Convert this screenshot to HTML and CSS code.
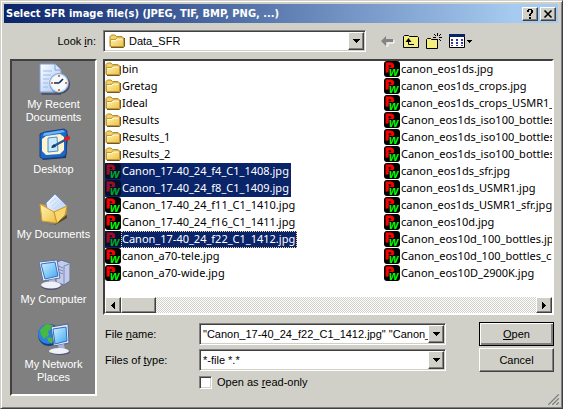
FILE: index.html
```html
<!DOCTYPE html>
<html lang="en">
<head>
<meta charset="utf-8">
<title>Select SFR image file(s)</title>
<link rel="stylesheet" href="styles.css">
</head>
<body>
<svg class="defs" aria-hidden="true">
  <defs>
    <linearGradient id="gold" x1="0" y1="0" x2="1" y2="1"><stop offset="0" stop-color="#fff6b4"/><stop offset="1" stop-color="#eebf45"/></linearGradient>
    <linearGradient id="screen" x1="0" y1="0" x2="1" y2="1"><stop offset="0" stop-color="#d4f4ff"/><stop offset="1" stop-color="#3da5f4"/></linearGradient>
    <linearGradient id="paper" x1="0" y1="0" x2="1" y2="1"><stop offset="0" stop-color="#ffffff"/><stop offset="1" stop-color="#a3c4f3"/></linearGradient>
    <symbol id="folder" viewBox="0 0 16 16">
      <path d="M2 14.500h12.500l1-1V5" fill="none" stroke="#6d5a28"/>
      <path d="M1 13V3.500L2.500 2H6l1.500 1.500H13L14.500 5v8.500H1z" fill="#f3d169" stroke="#b78c23"/>
      <path d="M1.500 13.500v-7h5l1-1.500h7v8.500z" fill="url(#gold)" stroke="#c29a34"/>
      <path d="M2.500 7.500h4.500l1-1.500h5.500" fill="none" stroke="#fffbd8"/>
    </symbol>
    <symbol id="pw" viewBox="0 0 16 16">
      <rect width="16" height="16" rx="3" fill="#000"/>
      <text x="1" y="11" class="pw-p">P</text>
      <text x="5" y="15" class="pw-w">w</text>
    </symbol>
    <symbol id="down" viewBox="0 0 7 4"><path d="M0 0h7v1H6v1H5v1H4v1H3V3H2V2H1V1H0z"/></symbol>
  </defs>
</svg>
<main class="dialog">
  <header class="titlebar">
    <h1>Select SFR image file(s) (JPEG, TIF, BMP, PNG, ...)</h1>
    <button class="raised caption" aria-label="Help"><svg width="10" height="10" viewBox="0 0 10 10"><path d="M2 3V1h1V0h4v1h1v3H7v1H6v2H4V5h1V4h1V1H4v2zM4 8h2v2H4z"/></svg></button>
    <button class="raised caption" aria-label="Close"><svg width="10" height="10" viewBox="0 0 10 10"><path d="M1.500 1.500l7 7M8.500 1.500l-7 7" stroke="#000" stroke-width="1.600"/></svg></button>
  </header>

  <div class="lookbar">
    <label for="look">Look <u>i</u>n:</label>
    <div class="combo">
      <svg class="lead" width="16" height="16"><use href="#folder"/></svg>
      <select id="look"><option>Data_SFR</option></select>
      <span class="raised drop"><svg width="7" height="4"><use href="#down"/></svg></span>
    </div>
    <div class="tools">
      <button aria-label="Back"><svg width="16" height="16" viewBox="0 0 16 16"><path d="M6 13h2v-3h6V7" fill="none" stroke="#fff"/><path d="M1 8l5-5v3h7v3H6v4z" fill="#848484"/></svg></button>
      <button aria-label="Up one level"><svg width="16" height="16" viewBox="0 0 16 16"><path d="M.5 14.500v-11l1-1h4l1 1h8l1 1v10z" fill="#f5ef80" stroke="#000"/><path d="M5.500 6v5.500H11" fill="none" stroke="#000"/><path d="M2.500 9L5.500 5l3 4z"/></svg></button>
      <button aria-label="Create new folder"><svg width="16" height="16" viewBox="0 0 16 16"><path d="M.5 15.500V6.500l1-1h3l1 1h6v9z" fill="#f5ef80" stroke="#000"/><path d="M11.500 0v3M11.500 6v2M7 4.500h3M13 4.500h3M8 1l2 2M15 1l-2 2M13 6l2 2" stroke="#000"/></svg></button>
      <button class="views" aria-label="Views"><svg width="24" height="16" viewBox="0 0 24 16"><path d="M.5 1.500h15v13H.5z" fill="#fff" stroke="#000"/><path d="M0 1h16v3H0z" fill="#0a246a"/><path d="M2 6h2v2H2zM7 6h2v2H7zM12 6h2v2h-2zM2 9h2v2H2zM7 9h2v2H7zM12 9h2v2h-2zM2 12h2v1H2zM7 12h2v1H7zM12 12h2v1h-2z" fill="#33339c"/><path d="M18 7h5v1h-1v1h-1v1h-1V9h-1V8h-1z"/></svg></button>
    </div>
  </div>

  <nav class="places">
    <a href="#recent">
      <svg width="32" height="32" viewBox="0 0 32 32"><path d="M3 30h20v2H4z" fill="#333b60" opacity=".6"/><path d="M2 1h15l6 6v22H2z" fill="url(#paper)" stroke="#7d9fdb"/><path d="M17 1v6h6" fill="#dbe8ff" stroke="#7d9fdb"/><path d="M5 8h9M5 12h8M5 16h6M5 20h5M5 24h5" stroke="#9bb9ea"/><circle cx="22" cy="21" r="10" fill="#39455f"/><circle cx="21" cy="20" r="10" fill="#8da9cc"/><circle cx="21" cy="20" r="8.500" fill="#f4fbff" stroke="#d3e5f6"/><path d="M21 20l4-4M21 20h-5" stroke="#17284e" stroke-width="1.700"/><path d="M20 12h2v2h-2zM20 26h2v2h-2zM13 19h2v2h-2zM27 19h2v2h-2z" fill="#e3753a"/></svg>
      <span>My Recent<br>Documents</span></a>
    <a href="#desktop">
      <svg width="32" height="32" viewBox="0 0 32 32"><path d="M4 30l22-2 3-22 1 1-2 23-23 2z" fill="#26365c"/><path d="M2 6l5-2 19-3 3 2-1 24-3 2-20 2-3-2z" fill="#1d68c8" stroke="#124088"/><path d="M6 5l19-3 2 2-22 4z" fill="#69b4f6"/><path d="M8 8l14-2 4 3v13l-4 4-14 1-4-4V11z" fill="#fff5cf"/><path d="M10 10l9-1 1 14-10 1z" fill="#cbe9ff" stroke="#498ed4"/><path d="M14 19l13-7" stroke="#245a92" stroke-width="2.500"/><path d="M13 20l5-1-2-3z" fill="#143869"/><path d="M28 11l2-1" stroke="#d91c20" stroke-width="4" stroke-linecap="round"/></svg>
      <span>Desktop</span></a>
    <a href="#documents">
      <svg width="32" height="32" viewBox="0 0 32 32"><path d="M5 30l11 2 13-10v3L17 32z" fill="#55471f"/><path d="M3 11l10 2 14-2 2 9-10 9z" fill="#d59e2d"/><path d="M8 10l9-9 12 12-7 12-12-4z" fill="url(#paper)" stroke="#6e96d6"/><path d="M12 10l6-5M14 13l7-6M16 16l8-7" stroke="#bfd6f5"/><path d="M2 11l14 8 3 11L4 28z" fill="url(#gold)" stroke="#d29c2d"/><path d="M16 19l13-6-2 9-8 8z" fill="#f9d76d" stroke="#ca962b"/></svg>
      <span>My Documents</span></a>
    <a href="#computer">
      <svg width="32" height="32" viewBox="0 0 32 32"><path d="M18 5l5-3 9 3v18l-6 4-8-3z" fill="#c2cbea" stroke="#606c9c"/><path d="M26 8v18M26 8l5-2M20 8l5 2M20 11l5 2M20 14l5 2" fill="none" stroke="#7e89b6"/><path d="M1 4l18-2 3 18-17 3z" fill="#e9edfc" stroke="#6070a2"/><path d="M3 6l14-2 3 14-13 3z" fill="url(#screen)" stroke="#3172c4"/><path d="M11 22l6-1 1 5h-6z" fill="#a9b2d5"/><ellipse cx="13" cy="28" rx="10" ry="4" fill="#4c5271"/><ellipse cx="13" cy="27" rx="10" ry="3.500" fill="#eef0fa"/></svg>
      <span>My Computer</span></a>
    <a href="#network">
      <svg width="32" height="32" viewBox="0 0 32 32"><circle cx="11" cy="12" r="11" fill="#123f8c"/><circle cx="10" cy="11" r="10" fill="#2d82df"/><path d="M2 7l6-6 7 1-1 4-4 2 1 4-5 4-3-4zM9 14l6 1-1 6-4-3z" fill="#48b83e"/><path d="M13 4l17-3 1 19-15 3z" fill="#e7ebfc" stroke="#53618e"/><path d="M15 6l13-2 1 14-12 3z" fill="url(#screen)" stroke="#2b70c3"/><path d="M20 22l6-1 1 6h-6z" fill="#a9b2d5"/><ellipse cx="22" cy="29" rx="10" ry="3" fill="#4c5271"/><ellipse cx="21" cy="28" rx="10" ry="3" fill="#eef0fa"/></svg>
      <span>My Network<br>Places</span></a>
  </nav>

  <section class="browser" aria-label="Files">
    <ul class="files">
      <li><svg><use href="#folder"/></svg><span>bin</span></li>
      <li><svg><use href="#folder"/></svg><span>Gretag</span></li>
      <li><svg><use href="#folder"/></svg><span>Ideal</span></li>
      <li><svg><use href="#folder"/></svg><span>Results</span></li>
      <li><svg><use href="#folder"/></svg><span>Results_1</span></li>
      <li><svg><use href="#folder"/></svg><span>Results_2</span></li>
      <li class="selected"><svg><use href="#pw"/></svg><span>Canon_17-40_24_f4_C1_1408.jpg</span></li>
      <li class="selected"><svg><use href="#pw"/></svg><span>Canon_17-40_24_f8_C1_1409.jpg</span></li>
      <li><svg><use href="#pw"/></svg><span>Canon_17-40_24_f11_C1_1410.jpg</span></li>
      <li><svg><use href="#pw"/></svg><span>Canon_17-40_24_f16_C1_1411.jpg</span></li>
      <li class="selected focused"><svg><use href="#pw"/></svg><span>Canon_17-40_24_f22_C1_1412.jpg</span></li>
      <li><svg><use href="#pw"/></svg><span>canon_a70-tele.jpg</span></li>
      <li><svg><use href="#pw"/></svg><span>canon_a70-wide.jpg</span></li>
      <li><svg><use href="#pw"/></svg><span>canon_eos1ds.jpg</span></li>
      <li><svg><use href="#pw"/></svg><span>canon_eos1ds_crops.jpg</span></li>
      <li><svg><use href="#pw"/></svg><span>canon_eos1ds_crops_USMR1_1</span></li>
      <li><svg><use href="#pw"/></svg><span>Canon_eos1ds_iso100_bottles.</span></li>
      <li><svg><use href="#pw"/></svg><span>Canon_eos1ds_iso100_bottles_</span></li>
      <li><svg><use href="#pw"/></svg><span>Canon_eos1ds_iso100_bottles_</span></li>
      <li><svg><use href="#pw"/></svg><span>canon_eos1ds_sfr.jpg</span></li>
      <li><svg><use href="#pw"/></svg><span>canon_eos1ds_USMR1.jpg</span></li>
      <li><svg><use href="#pw"/></svg><span>canon_eos1ds_USMR1_sfr.jpg</span></li>
      <li><svg><use href="#pw"/></svg><span>canon_eos10d.jpg</span></li>
      <li><svg><use href="#pw"/></svg><span>Canon_eos10d_100_bottles.jpg</span></li>
      <li><svg><use href="#pw"/></svg><span>Canon_eos10d_100_bottles_cr</span></li>
      <li><svg><use href="#pw"/></svg><span>Canon_eos10D_2900K.jpg</span></li>
    </ul>
    <div class="scrollbar">
      <button class="raised" aria-label="Scroll left"><svg width="4" height="7" viewBox="0 0 4 7"><path d="M4 0v7H3V6H2V5H1V4H0V3h1V2h1V1h1V0z"/></svg></button>
      <span class="raised thumb"></span>
      <button class="raised end" aria-label="Scroll right"><svg width="4" height="7" viewBox="0 0 4 7"><path d="M0 0v7h1V6h1V5h1V4h1V3H3V2H2V1H1V0z"/></svg></button>
    </div>
  </section>

  <form class="fields">
    <label for="name">File <u>n</u>ame:</label>
    <div class="combo">
      <input id="name" type="text" value="&quot;Canon_17-40_24_f22_C1_1412.jpg&quot; &quot;Canon_">
      <button type="button" class="raised drop" aria-label="Recent names"><svg width="7" height="4"><use href="#down"/></svg></button>
    </div>
    <button type="button" class="raised action default"><span><u>O</u>pen</span></button>
    <label for="type">Files of <u>t</u>ype:</label>
    <div class="combo">
      <select id="type"><option>*-file *.*</option></select>
      <span class="raised drop"><svg width="7" height="4"><use href="#down"/></svg></span>
    </div>
    <button type="button" class="raised action">Cancel</button>
    <label class="check"><input type="checkbox"><span>Open as <u>r</u>ead-only</span></label>
  </form>
  <svg class="grip" width="12" height="12" viewBox="0 0 12 12"><path d="M0 12L12 0M4 12l8-8M8 12l4-4" stroke="#fff"/><path d="M1 12L12 1M5 12l7-7M9 12l3-3" stroke="#808080" stroke-width="1.500"/></svg>
</main>
</body>
</html>
```

FILE: styles.css
```css
:root {
  --face: #d0d0c8;
  --shade: #808080;
  --dark: #404040;
  --navy: #0a246a;
}

* { box-sizing: border-box; }

body {
  margin: 0;
  background: var(--face);
  color: #000;
  font: 11px/16px "Liberation Sans", sans-serif;
}

button, input, select {
  margin: 0;
  padding: 0;
  border: 0;
  border-radius: 0;
  background: none;
  color: inherit;
  font: inherit;
}

.defs { position: absolute; width: 0; height: 0; }

.pw-p { font: bold 13px "Liberation Sans", sans-serif; fill: #f00; stroke: #f00; }
.pw-w { font: bold italic 12px "Liberation Sans", sans-serif; fill: #0f0; stroke: #000; stroke-width: 2px; paint-order: stroke; }

.dialog {
  position: relative;
  display: grid;
  grid-template-columns: 87px minmax(0, 1fr);
  grid-template-rows: 19px 22px minmax(255px, 1fr) auto;
  column-gap: 6px;
  row-gap: 7px;
  min-height: 100vh;
  padding: 3px 8px 12px 9px;
  border: 1px solid;
  border-color: var(--face) var(--dark) var(--dark) var(--face);
  box-shadow: inset 1px 1px #fff, inset -1px -1px var(--shade);
}

.raised {
  display: flex;
  align-items: center;
  justify-content: center;
  background: var(--face);
  border: 1px solid;
  border-color: #fff var(--dark) var(--dark) #fff;
  box-shadow: inset -1px -1px var(--shade);
}

.titlebar {
  grid-column: 1 / -1;
  display: flex;
  align-items: center;
  margin: 0 -4px 0 -6px;
  padding: 0 2px;
  background: linear-gradient(to right, #0a246a, #a6caf0 92%);
}

.titlebar h1 {
  flex: 1;
  margin: 0;
  color: #fff;
  font: bold 11px/16px "DejaVu Sans Condensed", "Noto Sans", sans-serif;
  white-space: nowrap;
}

.caption { width: 16px; height: 14px; }
.caption + .caption { margin-left: 2px; }

.lookbar {
  grid-column: 1 / -1;
  display: grid;
  grid-template-columns: 87px minmax(0, 1fr) 182px;
  column-gap: 6px;
}

.lookbar label { padding: 3px 1px; text-align: right; }

.combo {
  display: flex;
  height: 22px;
  padding: 1px;
  background: #fff;
  border: 1px solid;
  border-color: var(--shade) #fff #fff var(--shade);
  box-shadow: inset 1px 1px var(--dark), inset -1px -1px var(--face);
}

.combo select, .combo input {
  flex: 1;
  min-width: 0;
  padding-left: 2px;
  appearance: none;
  outline: 0;
}

.combo .lead { margin: 1px 2px 0 4px; }
.drop { width: 16px; flex: none; }

.tools { display: flex; padding: 3px 0 0 8px; }
.tools button { width: 16px; height: 16px; margin-right: 7px; }
.tools svg { display: block; }
.tools .views { width: 24px; }

.places {
  grid-row: 3 / 5;
  display: grid;
  grid-auto-rows: 65px;
  align-content: start;
  padding-top: 2px;
  background: #808080;
  border: 2px solid;
  border-color: var(--dark) #fff #fff var(--dark);
}

.places a {
  display: flex;
  flex-direction: column;
  align-items: center;
  color: #fff;
  font-size: 11px;
  line-height: 13px;
  text-align: center;
  text-decoration: none;
}

.places span { padding-top: 3px; }

.browser {
  display: flex;
  flex-direction: column;
  min-width: 0;
  background: #fff;
  border: 2px solid;
  border-color: var(--dark) #fff #fff var(--dark);
}

.files {
  flex: 1;
  display: grid;
  grid-template-rows: repeat(13, 17px);
  grid-auto-flow: column;
  grid-auto-columns: 279px;
  margin: 0;
  padding: 0;
  overflow: hidden;
  font-family: "Noto Sans", sans-serif;
  list-style: none;
}

.files li { display: flex; white-space: nowrap; }
.files svg { width: 16px; height: 16px; flex: none; }
.files span { height: 17px; padding: 0 2px 0 1px; }
.selected span { background: var(--navy); color: #fff; }
.selected svg { opacity: .6; }
.selected { background: linear-gradient(var(--navy), var(--navy)) 0 0 / 16px 17px no-repeat; }
.focused span { outline: 1px dotted #f5db95; outline-offset: -1px; }

.scrollbar {
  display: flex;
  height: 16px;
  background: repeating-conic-gradient(#fff 0 25%, var(--face) 0 50%) 0 0 / 2px 2px;
}

.scrollbar button { width: 16px; }
.thumb { width: 35px; }
.scrollbar .end { margin-left: auto; }

.fields {
  display: grid;
  grid-template-columns: 90px minmax(0, 1fr) 75px;
  grid-template-rows: 24px 24px 22px;
  align-items: center;
  column-gap: 6px;
  row-gap: 2px;
  margin: 0;
}

.fields > label { padding: 0 2px; }
.fields .combo { margin-right: 27px; }
.action { height: 24px; }
.default { outline: 1px solid #000; outline-offset: -1px; border-color: #000; box-shadow: inset 1px 1px #fff, inset -2px -2px var(--shade); }

.fields .check {
  grid-column: 2 / -1;
  align-self: start;
  display: flex;
  align-items: center;
  gap: 5px;
  padding: 0;
}

.check input {
  width: 13px;
  height: 13px;
  appearance: none;
  background: #fff;
  border: 1px solid;
  border-color: var(--shade) #fff #fff var(--shade);
  box-shadow: inset 1px 1px var(--dark), inset -1px -1px var(--face);
}

.grip { position: absolute; right: 3px; bottom: 3px; }
```
